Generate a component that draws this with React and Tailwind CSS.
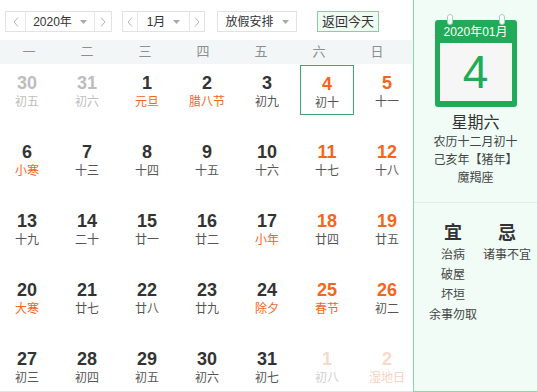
const ORANGE = "text-[#f4661c]";

const rows = [
  [
    { d: 30, l: "初五", t: "prev" },
    { d: 31, l: "初六", t: "prev" },
    { d: 1, l: "元旦", fest: true },
    { d: 2, l: "腊八节", fest: true },
    { d: 3, l: "初九" },
    { d: 4, l: "初十", hot: true, sel: true },
    { d: 5, l: "十一", hot: true },
  ],
  [
    { d: 6, l: "小寒", fest: true },
    { d: 7, l: "十三" },
    { d: 8, l: "十四" },
    { d: 9, l: "十五" },
    { d: 10, l: "十六" },
    { d: 11, l: "十七", hot: true },
    { d: 12, l: "十八", hot: true },
  ],
  [
    { d: 13, l: "十九" },
    { d: 14, l: "二十" },
    { d: 15, l: "廿一" },
    { d: 16, l: "廿二" },
    { d: 17, l: "小年", fest: true },
    { d: 18, l: "廿四", hot: true },
    { d: 19, l: "廿五", hot: true },
  ],
  [
    { d: 20, l: "大寒", fest: true },
    { d: 21, l: "廿七" },
    { d: 22, l: "廿八" },
    { d: 23, l: "廿九" },
    { d: 24, l: "除夕", fest: true },
    { d: 25, l: "春节", hot: true, fest: true },
    { d: 26, l: "初二", hot: true },
  ],
  [
    { d: 27, l: "初三" },
    { d: 28, l: "初四" },
    { d: 29, l: "初五" },
    { d: 30, l: "初六" },
    { d: 31, l: "初七" },
    { d: 1, l: "初八", t: "next" },
    { d: 2, l: "湿地日", t: "next", fest: true },
  ],
];

const weekdays = ["一", "二", "三", "四", "五", "六", "日"];

const Chevron = ({ dir }) => (
  <svg width="6" height="10" viewBox="0 0 6 10" fill="none">
    <polyline
      points={dir === "left" ? "5,0.5 1,5 5,9.5" : "1,0.5 5,5 1,9.5"}
      stroke="#b5b5b5"
      strokeWidth="1"
    />
  </svg>
);

const Caret = () => (
  <svg width="7" height="4" viewBox="0 0 7 4">
    <polygon points="0,0 7,0 3.5,4" fill="#a8a8a8" />
  </svg>
);

const Stepper = ({ label, prevW, labelW, nextW }) => (
  <div className="flex h-[21px] border border-[#e2e2e2] bg-white">
    <button className={`flex items-center justify-center border-r border-[#e6e6e6] ${prevW}`}>
      <Chevron dir="left" />
    </button>
    <div className={`flex items-center justify-center gap-[8px] ${labelW}`}>
      <span>{label}</span>
      <Caret />
    </div>
    <button className={`flex items-center justify-center border-l border-[#e6e6e6] ${nextW}`}>
      <Chevron dir="right" />
    </button>
  </div>
);

const numClass = (c) => {
  if (c.t === "prev") return "text-[#bdbdbd]";
  if (c.t === "next") return "text-[#f9d9c9]";
  if (c.hot) return ORANGE;
  return "text-[#333]";
};

const lunarClass = (c) => {
  if (c.t === "prev") return "text-[#bdbdbd]";
  if (c.t === "next") return c.fest ? "text-[#f7d3c0]" : "text-[#cfcfcf]";
  if (c.fest) return ORANGE;
  return "text-[#555]";
};

const DayCell = ({ c, last }) => (
  <div className={last ? "h-[50px]" : "h-[69px]"}>
    <div
      className={`mx-[3px] flex h-[50px] flex-col items-center pt-[8px] ${
        c.sel ? "border border-[#3ca86b] pt-[7px]" : ""
      }`}
    >
      <span className={`text-[18px] font-bold leading-[20px] ${numClass(c)}`}>{c.d}</span>
      <span className={`text-[12px] leading-[18px] ${lunarClass(c)}`}>{c.l}</span>
    </div>
  </div>
);

export default function App() {
  return (
    <div className="flex h-[392px] w-[537px] overflow-hidden bg-white font-['Liberation_Sans','Noto_Sans_CJK_SC',sans-serif] text-[#333]">
      <div className="w-[413px] shrink-0 overflow-hidden border-b border-[#e3e3e3]">
        <div className="flex h-[40px] items-start pl-[5px] pt-[11px] text-[12px]">
          <Stepper label="2020年" prevW="w-[20px]" labelW="w-[68px]" nextW="w-[17px]" />
          <div className="ml-[10px]">
            <Stepper label="1月" prevW="w-[15px]" labelW="w-[51px]" nextW="w-[15px]" />
          </div>
          <div className="ml-[12px] flex h-[21px] w-[80px] items-center justify-center gap-[8px] border border-[#e2e2e2]">
            <span>放假安排</span>
            <Caret />
          </div>
          <button className="ml-[20px] flex h-[21px] w-[62px] items-center justify-center border border-[#86cfa3] bg-[#effaf3] text-[13px]">
            返回今天
          </button>
        </div>

        <div className="h-[24px] bg-[#f3f6f6]">
          <div className="grid h-full w-[406px] grid-cols-7 items-center text-[13px] text-[#8e8e8e]">
            {weekdays.map((w) => (
              <span key={w} className="text-center">
                {w}
              </span>
            ))}
          </div>
        </div>

        <div className="-ml-[3px] mt-[1px] grid w-[420px] grid-cols-7">
          {rows.map((r, ri) =>
            r.map((c, ci) => <DayCell key={`${ri}-${ci}`} c={c} last={ri === rows.length - 1} />)
          )}
        </div>
      </div>

      <div className="flex flex-1 flex-col border-b border-l border-[#8fd3aa] bg-[#f0fcf5]">
        <div className="flex h-[203px] flex-col items-center border-b border-[#dcf1e4] pt-[20px]">
          <div className="relative flex h-[87px] w-[82px] flex-col rounded-[3px] bg-[#21aa57] px-[5px] pb-[6px]">
            <span className="absolute left-[12px] top-[-6px] h-[11px] w-[6px] rounded-full border border-[#9fd8b5] bg-white" />
            <span className="absolute right-[12px] top-[-6px] h-[11px] w-[6px] rounded-full border border-[#9fd8b5] bg-white" />
            <div className="flex h-[23px] items-center justify-center text-[12px] text-white">2020年01月</div>
            <div className="flex flex-1 items-center justify-center bg-[#f6f6f6] text-[46px] leading-none text-[#22ab55]">
              4
            </div>
          </div>
          <div className="mt-[6px] text-[16px] leading-[20px] text-[#333]">星期六</div>
          <div className="text-[12px] leading-[18px] text-[#444]">农历十二月初十</div>
          <div className="text-[12px] leading-[18px] text-[#444]">己亥年【猪年】</div>
          <div className="text-[12px] leading-[18px] text-[#444]">魔羯座</div>
        </div>

        <div className="flex pl-[12px] pt-[18px]">
          <div className="flex w-[54px] flex-col items-center">
            <span className="text-[18px] font-bold leading-[24px] text-[#333]">宜</span>
            <div className="flex flex-col items-center text-[12px] leading-[20px] text-[#444]">
              <span>治病</span>
              <span>破屋</span>
              <span>坏垣</span>
              <span>余事勿取</span>
            </div>
          </div>
          <div className="flex w-[54px] flex-col items-center">
            <span className="text-[18px] font-bold leading-[24px] text-[#333]">忌</span>
            <div className="flex flex-col items-center text-[12px] leading-[20px] text-[#444]">
              <span>诸事不宜</span>
            </div>
          </div>
        </div>
      </div>
    </div>
  );
}
